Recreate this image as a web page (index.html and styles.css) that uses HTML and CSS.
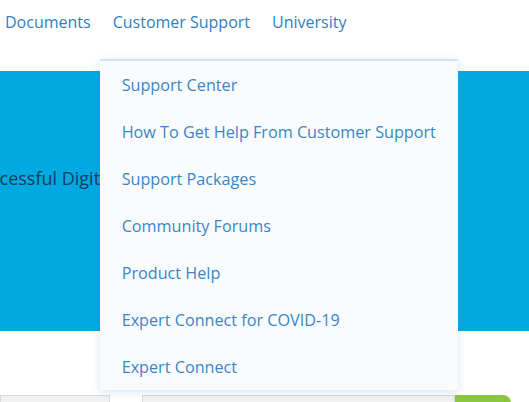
FILE: index.html
```html
<!DOCTYPE html>
<html lang="en">
<head>
<meta charset="utf-8">
<title>Customer Support menu</title>
<link rel="stylesheet" href="styles.css">
</head>
<body>
<div class="page">
  <header class="topbar">
    <nav class="nav">
      <a class="nav-link" href="#">Documents</a>
      <div class="nav-item">
        <a class="nav-link" href="#">Customer Support</a>
        <ul class="dropdown">
          <li><a href="#">Support Center</a></li>
          <li><a href="#">How To Get Help From Customer Support</a></li>
          <li><a href="#">Support Packages</a></li>
          <li><a href="#">Community Forums</a></li>
          <li><a href="#">Product Help</a></li>
          <li><a href="#">Expert Connect for COVID-19</a></li>
          <li><a href="#">Expert Connect</a></li>
        </ul>
      </div>
      <a class="nav-link" href="#">University</a>
    </nav>
  </header>
  <section class="hero">
    <p class="hero-text">Successful Digital Transformation</p>
  </section>
  <section class="search">
    <div class="field small"></div>
    <div class="search-group">
      <div class="field wide"></div>
      <div class="go"></div>
    </div>
  </section>
</div>
</body>
</html>
```

FILE: styles.css
```css
* { box-sizing: border-box; }
html, body { margin: 0; padding: 0; }
body {
  font-family: "Open Sans", "Lato", sans-serif;
  background: #ffffff;
  width: 529px;
  height: 402px;
  overflow: hidden;
}
.page { display: flex; flex-direction: column; }
.topbar {
  height: 71px;
  background: #ffffff;
  display: flex;
  align-items: flex-start;
}
.nav {
  display: flex;
  gap: 22px;
  padding: 10px 0 0 5px;
}
.nav-item { position: relative; }
.nav-link {
  color: #2f7fc1;
  text-decoration: none;
  font-size: 16px;
  line-height: 24px;
}
.dropdown {
  position: absolute;
  top: 49px;
  left: -13px;
  width: 358px;
  margin: 0;
  padding: 0;
  list-style: none;
  background: #f9fbfd;
  border-top: 2px solid #d3e3f1;
  box-shadow: 0 2px 8px rgba(40, 110, 170, 0.18);
  z-index: 10;
}
.dropdown li {
  height: 47px;
  display: flex;
  align-items: center;
  padding-left: 22px;
}
.dropdown a {
  color: #3a86c5;
  text-decoration: none;
  font-size: 16.2px;
}
.hero {
  height: 260px;
  background: #00a9e2;
  display: flex;
  align-items: center;
  overflow: hidden;
}
.hero-text {
  margin: 0 0 46px -30px;
  white-space: nowrap;
  font-size: 18px;
  color: #183d5c;
}
.search {
  padding-top: 64px;
  display: flex;
  gap: 32px;
}
.field {
  height: 20px;
  background: #f1f1f1;
  border: 1px solid #d9d9d9;
}
.field.small { width: 110px; }
.search-group { display: flex; }
.field.wide { width: 313px; }
.go {
  width: 56px;
  height: 20px;
  background: #8cc63f;
  border-top-right-radius: 8px;
}
```
